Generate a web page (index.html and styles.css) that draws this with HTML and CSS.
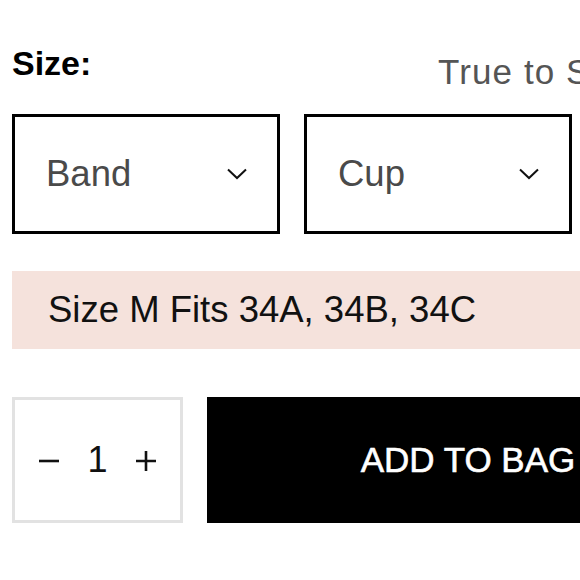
FILE: index.html
```html
<!DOCTYPE html>
<html lang="en">
<head>
<meta charset="utf-8">
<title>Size selector</title>
<link rel="stylesheet" href="styles.css">
</head>
<body>
<div class="page">
  <div class="size-head">
    <span class="size-label">Size:</span>
    <span class="size-note">True to Size</span>
  </div>
  <div class="selects">
    <div class="select">
      <span class="select-text">Band</span>
      <svg class="chev" width="20" height="12" viewBox="0 0 20 12"><path d="M1 1.5 L10 10 L19 1.5" fill="none" stroke="#111" stroke-width="2"/></svg>
    </div>
    <div class="select">
      <span class="select-text">Cup</span>
      <svg class="chev" width="20" height="12" viewBox="0 0 20 12"><path d="M1 1.5 L10 10 L19 1.5" fill="none" stroke="#111" stroke-width="2"/></svg>
    </div>
  </div>
  <div class="fit-note">Size M Fits 34A, 34B, 34C</div>
  <div class="buy-row">
    <div class="qty">
      <svg class="qty-btn" width="20" height="20" viewBox="0 0 20 20" aria-label="decrease"><path d="M0 10 H20" stroke="#111" stroke-width="2.6"/></svg>
      <span class="qty-val">1</span>
      <svg class="qty-btn" width="20" height="20" viewBox="0 0 20 20" aria-label="increase"><path d="M0 10 H20 M10 0 V20" stroke="#111" stroke-width="2.6"/></svg>
    </div>
    <div class="add-btn">ADD TO BAG</div>
  </div>
</div>
</body>
</html>
```
FILE: styles.css
```css
html, body {
  margin: 0;
  padding: 0;
  background: #fff;
  overflow: hidden;
}
body {
  font-family: "Liberation Sans", Arial, Helvetica, sans-serif;
  color: #111;
}
.page {
  width: 717px;
  padding: 33px 0 0 12px;
}
.size-head {
  display: flex;
  align-items: center;
  height: 60px;
  white-space: nowrap;
}
.size-label {
  width: 426px;
  flex: none;
  font-size: 34px;
  font-weight: bold;
  color: #000;
}
.size-note {
  margin-top: 18px;
  font-size: 35px;
  letter-spacing: 1.1px;
  color: #555;
}
.selects {
  display: flex;
  gap: 24px;
  margin-top: 21px;
}
.select {
  box-sizing: border-box;
  width: 268px;
  height: 120px;
  border: 3px solid #000;
  display: flex;
  align-items: center;
  justify-content: space-between;
  padding: 0 30px 0 31px;
}
.select-text {
  font-size: 36.5px;
  color: #4a4a4a;
}
.fit-note {
  margin-top: 37px;
  height: 78px;
  box-sizing: border-box;
  background: #f5e2dc;
  display: flex;
  align-items: center;
  padding-left: 36px;
  font-size: 36.5px;
  color: #111;
}
.buy-row {
  display: flex;
  gap: 24px;
  margin-top: 48px;
}
.qty {
  box-sizing: border-box;
  width: 171px;
  height: 126px;
  border: 3px solid #e2e2e2;
  display: flex;
  align-items: center;
  justify-content: center;
  gap: 28px;
  font-size: 36px;
  color: #111;
}
.qty-btn {
  flex: none;
  margin-top: 2px;
}
.add-btn {
  flex: 1;
  height: 126px;
  background: #000;
  color: #fff;
  display: flex;
  align-items: center;
  justify-content: center;
  font-size: 35px;
  -webkit-text-stroke: 0.6px #fff;
}
```
